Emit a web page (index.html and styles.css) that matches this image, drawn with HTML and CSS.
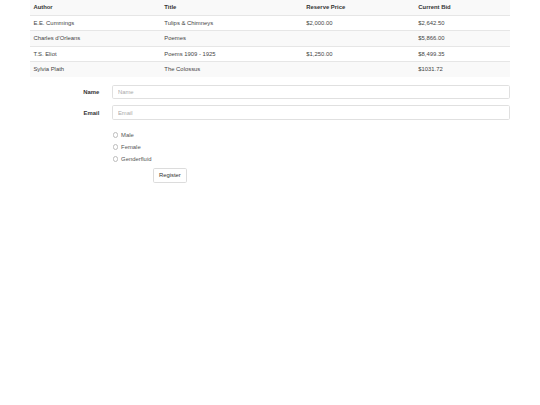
FILE: index.html
```html
<!DOCTYPE html>
<html>
<head>
<meta charset="utf-8">
<link rel="stylesheet" href="styles.css">
</head>
<body>
<div class="container">
  <table class="table">
    <tbody>
      <tr class="head"><th>Author</th><th>Title</th><th>Reserve Price</th><th>Current Bid</th></tr>
      <tr><td>E.E. Cummings</td><td>Tulips &amp; Chimneys</td><td>$2,000.00</td><td>$2,642.50</td></tr>
      <tr><td>Charles d'Orleans</td><td>Poemes</td><td></td><td>$5,866.00</td></tr>
      <tr><td>T.S. Eliot</td><td>Poems 1909 - 1925</td><td>$1,250.00</td><td>$8,499.35</td></tr>
      <tr><td>Sylvia Plath</td><td>The Colossus</td><td></td><td>$1031.72</td></tr>
    </tbody>
  </table>

  <form class="form">
    <div class="form-group">
      <label class="control-label" for="name">Name</label>
      <div class="field"><input id="name" class="form-control" type="text" placeholder="Name"></div>
    </div>
    <div class="form-group">
      <label class="control-label" for="email">Email</label>
      <div class="field"><input id="email" class="form-control" type="email" placeholder="Email"></div>
    </div>
    <div class="form-group radios">
      <div class="field">
        <label class="radio"><input type="radio" name="g"><span>Male</span></label>
        <label class="radio"><input type="radio" name="g"><span>Female</span></label>
        <label class="radio"><input type="radio" name="g"><span>Genderfluid</span></label>
      </div>
    </div>
    <div class="form-group actions">
      <button type="button" class="btn">Register</button>
    </div>
  </form>
</div>
</body>
</html>
```

FILE: styles.css
```css
html, body {
  margin: 0;
  padding: 0;
  background: #fff;
}
body {
  font-family: "Liberation Sans", Arial, Helvetica, sans-serif;
  font-size: 5.88px;
  line-height: 8.4px;
  color: #444;
}
.container {
  width: 480px;
  margin: 0 auto;
}
.table {
  width: 100%;
  border-collapse: collapse;
  border-spacing: 0;
  margin-bottom: 8.4px;
  table-layout: fixed;
}
.table th, .table td {
  padding: 3.25px 3.4px 2.85px;
  height: 8.4px;
  text-align: left;
  vertical-align: top;
  border-top: 1px solid #e6e6e6;
  line-height: 8.4px;
}
.table tr:first-child th { border-top: 0; }
.table th { font-weight: bold; color: #333; }
.table tr:nth-of-type(odd) { background: #f9f9f9; }
.table th:nth-child(1) { width: 124.2px; }
.table th:nth-child(2) { width: 135.2px; }
.table th:nth-child(3) { width: 105.2px; }

.form {
  margin: 0 -6.3px;
}
.form-group {
  display: flex;
  margin-bottom: 6.3px;
}
.control-label {
  width: 81.9px;
  box-sizing: border-box;
  padding: 3.2px 6.3px 0 6.3px;
  text-align: right;
  font-weight: bold;
  color: #333;
}
.field {
  flex: 1;
  padding: 0 6.3px;
}
.form-control {
  display: block;
  width: 100%;
  height: 14.3px;
  box-sizing: border-box;
  padding: 2px 5px;
  font-family: inherit;
  font-size: 5.88px;
  line-height: 8.4px;
  color: #555;
  background: #fff;
  border: 1px solid #e0e0e0;
  border-radius: 1.7px;
  outline: none;
}
.form-control::placeholder { color: #aaa; }

.radios {
  padding-left: 81.9px;
  padding-top: 2.8px;
  margin-bottom: 3.6px;
}
.radio {
  display: flex;
  align-items: center;
  height: 12px;
  font-weight: normal;
  color: #555;
  cursor: pointer;
}
.radio input {
  appearance: none;
  -webkit-appearance: none;
  box-sizing: border-box;
  width: 5.6px;
  height: 5.6px;
  margin: 0 2.6px 0 1px;
  border: 0.6px solid #bdbdbd;
  border-radius: 50%;
  background: #fff;
}
.actions {
  padding-left: 129.2px;
}
.btn {
  display: inline-block;
  box-sizing: border-box;
  height: 14.3px;
  padding: 2px 5px;
  font-family: inherit;
  font-size: 5.88px;
  line-height: 8.4px;
  color: #333;
  background: #fff;
  border: 1px solid #dcdcdc;
  border-radius: 1.7px;
  cursor: pointer;
}
```
